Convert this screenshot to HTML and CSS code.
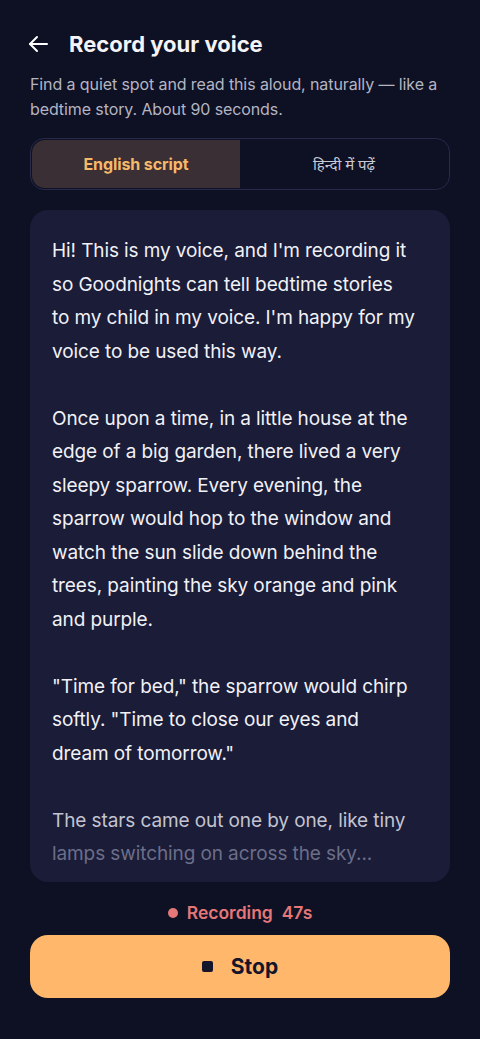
FILE: index.html
```html
<!DOCTYPE html>
<html lang="en">
<head>
    <meta charset="UTF-8">
    <meta name="viewport" content="width=device-width, initial-scale=1.0">
    <title>Record your voice</title>
    <link rel="stylesheet" href="styles.css">
</head>
<body>
    <div class="pantalla">
        <header class="cabecera">
            <span class="volver">
                <svg width="20" height="18" viewBox="0 0 20 18" fill="none" stroke="#ffffff" stroke-width="2" stroke-linecap="round" stroke-linejoin="round">
                    <path d="M19 9H2"/>
                    <path d="M9 2L2 9l7 7"/>
                </svg>
            </span>
            <h1>Record your voice</h1>
        </header>
        <p class="intro">Find a quiet spot and read this aloud, naturally — like a bedtime story. About 90 seconds.</p>

        <div class="selector">
            <div class="opcion activa">English script</div>
            <div class="opcion hindi">हिन्दी में पढ़ें</div>
        </div>

        <div class="guion">
            <p>Hi! This is my voice, and I'm recording it so Goodnights can tell bedtime stories<br>to my child in my voice. I'm happy for my voice to be used this way.</p>
            <p>Once upon a time, in a little house at the edge of a big garden, there lived a very sleepy sparrow. Every evening, the sparrow would hop to the window and watch the sun slide down behind the trees, painting the sky orange and pink and purple.</p>
            <p>"Time for bed," the sparrow would chirp softly. "Time to close our eyes and<br>dream of tomorrow."</p>
            <p class="ultimo">The stars came out one by one, like tiny <span class="tenue">lamps switching on across the sky...</span></p>
        </div>

        <div class="estado">
            <span class="punto"></span>
            <span>Recording&nbsp; 47s</span>
        </div>

        <button class="parar">
            <span class="cuadro"></span>
            Stop
        </button>
    </div>
</body>
</html>
```

FILE: styles.css
```css
html, body{
    margin:0;
    padding:0;
    background-color:#0e1024;
}
body{
    font-family:Inter, "Noto Sans", sans-serif;
    color:#ffffff;
}
.pantalla{
    padding:0 30px;
}
.cabecera{
    display:flex;
    align-items:center;
    gap:21px;
    padding-top:31px;
    height:26px;
}
.volver{
    display:flex;
    margin-left:-2px;
}
.cabecera h1{
    margin:0;
    font-size:22px;
    font-weight:700;
    letter-spacing:0;
    color:#f4f4f8;
}
.intro{
    margin:15px 0 0 0;
    font-size:16px;
    line-height:25px;
    color:#b4b5c2;
    letter-spacing:-0.1px;
}
.selector{
    display:flex;
    margin-top:16px;
    height:48px;
    border:1px solid #272a48;
    border-radius:14px;
    padding:1px;
}
.opcion{
    flex:1;
    display:flex;
    align-items:center;
    justify-content:center;
    font-size:16px;
}
.activa{
    background-color:#3a2f34;
    border-radius:13px 0 0 13px;
    color:#f6b869;
    font-weight:700;
    letter-spacing:-0.1px;
}
.hindi{
    color:#c9cad6;
    font-family:"Noto Sans", sans-serif;
    font-size:15px;
}
.guion{
    margin-top:20px;
    background-color:#1a1c38;
    border-radius:18px;
    padding:24px 22px 14px 22px;
    height:634px;
    overflow:hidden;
}
.guion p{
    margin:0 0 33.5px 0;
    font-size:19px;
    line-height:33.5px;
    color:#f1f1f6;
    letter-spacing:-0.1px;
}
.guion .ultimo{
    margin:0;
    color:#c3c4d0;
}
.tenue{
    color:#6c6e88;
}
.estado{
    display:flex;
    align-items:center;
    justify-content:center;
    gap:9px;
    margin-top:20px;
    font-size:17.5px;
    font-weight:600;
    color:#e47777;
}
.punto{
    width:10px;
    height:10px;
    border-radius:50%;
    background-color:#e47777;
}
.parar{
    display:flex;
    align-items:center;
    justify-content:center;
    gap:18px;
    width:100%;
    height:63px;
    margin-top:12px;
    border:none;
    border-radius:18px;
    background-color:#ffb86b;
    color:#14152a;
    font-family:Inter, "Noto Sans", sans-serif;
    font-size:21px;
    font-weight:700;
}
.cuadro{
    width:11px;
    height:11px;
    border-radius:2px;
    background-color:#14152a;
}
```
